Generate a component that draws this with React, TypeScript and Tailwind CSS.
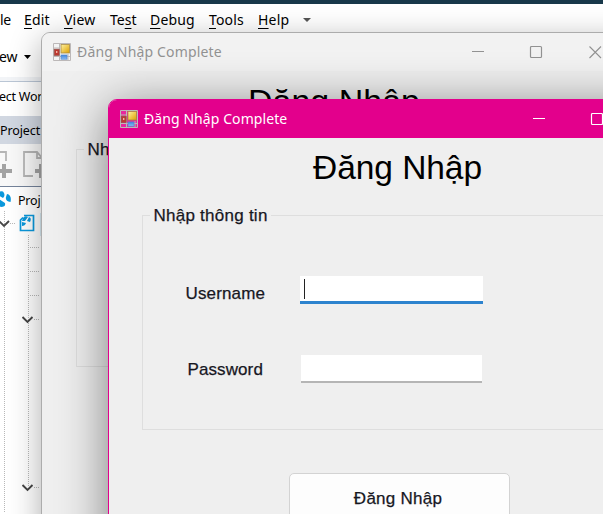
import type { ReactNode } from "react";

const ui = "font-['Noto_Sans','Open_Sans',sans-serif]";
const formFont = "font-['Liberation_Sans',Arial,sans-serif]";
const formText = "text-[17px] text-[#17171f] [-webkit-text-stroke:0.25px_#17171f]";

function FormIcon() {
  return (
    <svg className="block h-[18px] w-[18px] shrink-0" viewBox="0 0 18 18">
      <defs>
        <linearGradient id="gold" x1="0" y1="0" x2="1" y2="1">
          <stop offset="0" stopColor="#fff2a0" />
          <stop offset="1" stopColor="#dda000" />
        </linearGradient>
        <linearGradient id="azure" x1="0" y1="0" x2="0" y2="1">
          <stop offset="0" stopColor="#3f83dc" />
          <stop offset="1" stopColor="#8bbcf2" />
        </linearGradient>
      </defs>
      <path d="M.5 .5H17.5V17.5H.5ZM6.5 1V17M1 5H7M1 13.5H17M15 11V17" fill="#fff" fillOpacity="0.15" stroke="#bcb8b8" />
      <rect x="8" y="1.5" width="8.5" height="8.5" fill="url(#gold)" stroke="#a98b42" strokeWidth=".8" />
      <rect x="1.2" y="6.2" width="5" height="6.3" fill="#bd3830" stroke="#94544e" strokeWidth=".7" />
      <rect x="3" y="8" width="1.4" height="2" fill="#f1b3a4" />
      <rect x="8" y="12" width="6" height="4.2" fill="url(#azure)" stroke="#568bd0" strokeWidth=".7" />
    </svg>
  );
}

function CaptionButtons() {
  return (
    <svg className="block h-[14px] w-[130px] shrink-0" viewBox="0 0 130 14" fill="none" stroke="currentColor">
      <path d="M0 6.5H12" />
      <rect x="58.5" y="1.5" width="11" height="11" rx="1" strokeWidth="1.2" />
      <path d="M117.5 1.5L129 13M129 1.5L117.5 13" strokeWidth="1.1" />
    </svg>
  );
}

function FormWindow({ frame, bar, caption, gap, heading, group, children }: {
  frame: string; bar: string; caption: string; gap: string; heading: string; group: string; children?: ReactNode;
}) {
  return (
    <section className={"absolute flex h-[600px] flex-col overflow-hidden rounded-tl-[9px] border bg-[#efefef] " + frame}>
      <header className={"flex h-[38px] shrink-0 items-center pl-[11px] " + bar}>
        <FormIcon />
        <span className={"ml-[6px] w-[146px] shrink-0 whitespace-nowrap text-[14px] leading-5 " + ui}>{caption}</span>
        <div className={gap}><CaptionButtons /></div>
      </header>
      <h1 className={"shrink-0 whitespace-nowrap leading-[38px] text-black " + formFont + " " + heading}>Đăng Nhập</h1>
      <fieldset className={"shrink-0 border border-[#dedede] " + group}>
        <legend className={"ml-[7px] h-[22px] whitespace-nowrap pl-[3.5px] pr-[3px] leading-6 tracking-[0.25px] " + formText + " " + formFont}>Nhập thông tin</legend>
        {children && <div className="flex flex-col pl-[42px] pt-[50px]">{children}</div>}
      </fieldset>
      {children && (
        <button className={"ml-[180px] mt-[43px] flex h-[49px] w-[221px] shrink-0 items-center justify-center rounded-[5px] border border-[#d3d3d3] bg-[#fdfdfd] pr-[3px] pt-[2px] tracking-[0.25px] " + formText + " " + formFont}>Đăng Nhập</button>
      )}
    </section>
  );
}

function Menu({ text, hot, className }: { text: string; hot: number; className: string }) {
  return (
    <span className={"shrink-0 whitespace-nowrap " + className}>
      {text.slice(0, hot)}<u className="underline-offset-[3px]">{text[hot]}</u>{text.slice(hot + 1)}
    </span>
  );
}

function ProjectTree() {
  return (
    <svg className="block h-[326px] w-[42px]" viewBox="0 187 42 326" fill="none">
      <g stroke="#b8b8b8" strokeDasharray="1 1">
        <path d="M4.5 211V514M28.5 235V487M10 223.5H15M30 247.5H40M30 271.5H40M30 295.5H40M34 319.5H40M34 487.5H40" />
      </g>
      <g fill="#0b98dc">
        <path d="M3 191.5Q-1 190 -2 195L3 198Q6 195 3 191.5ZM7 194Q12 195 10.5 202Q5 201 6 197ZM-1 199L5 203Q6 207 1 207L-1 206Z" />
        <path d="M23 218Q25 215 28 217L25 221H22ZM29 217Q32 218 30 222L27 221ZM22 222L26 223Q25 226 22 226Z" />
      </g>
      <path d="M23 217.5L20.5 220V230.5H33.5V215.5H24" stroke="#0b98dc" strokeWidth="1.7" />
      <g stroke="#454545" strokeWidth="1.9">
        <path d="M-1 221L4 226L9 221M22.5 317L27.5 322L32.5 317M22.5 485L27.5 490L32.5 485" />
      </g>
      <rect x="40" y="213" width="2" height="23" fill="#d9edf5" />
    </svg>
  );
}

export default function App() {
  return (
    <main className={"relative h-[514px] w-[603px] overflow-hidden bg-white text-black " + ui}>
      <div className="h-1 bg-[#18384a]" />
      <nav className="flex h-8 items-center text-[14px] leading-5">
        <span className="w-6 shrink-0 tracking-[-0.4px]">le</span>
        <Menu text="Edit" hot={0} className="w-10 tracking-[0.2px]" />
        <Menu text="View" hot={0} className="w-[46px] tracking-[0.2px]" />
        <Menu text="Test" hot={2} className="w-10" />
        <Menu text="Debug" hot={0} className="w-[59px] tracking-[0.15px]" />
        <Menu text="Tools" hot={0} className="w-[49px] tracking-[0.15px]" />
        <Menu text="Help" hot={0} className="w-[45px] tracking-[0.2px]" />
        <svg className="h-1 w-2" viewBox="0 0 8 4"><path d="M0 0H8L4 4Z" fill="#555" /></svg>
      </nav>
      <aside className="flex h-[478px] w-[42px] flex-col overflow-hidden text-[14px]">
        <div className="flex h-[41px] shrink-0 items-center">
          <span className="-ml-[1px] w-[25px] shrink-0">ew</span>
          <svg className="h-1 w-[7px] shrink-0" viewBox="0 0 8 4" preserveAspectRatio="none"><path d="M0 0H8L4 4Z" fill="#000" /></svg>
        </div>
        <div className="h-1 shrink-0 bg-[#f2f4f7]" />
        <div className="flex h-[35px] shrink-0 items-center whitespace-nowrap border-t border-[#bac6d5] pb-[3px] text-[12.5px] tracking-[-0.25px]"><span className="-ml-[1px]">ect Wor</span></div>
        <div className="flex h-7 shrink-0 items-center whitespace-nowrap bg-[#d1d7e1] pt-[2px] text-[12.5px] tracking-[-0.1px]">Project</div>
        <div className="h-[43px] shrink-0 border-b border-[#74839a] bg-[#f8f8f8]">
          <svg className="block h-[42px] w-[42px]" viewBox="0 144 42 42" fill="none" stroke="#b5b5b5" strokeWidth="1.8">
            <path d="M0 152H6V161M33 176H24V152H37L42 158M37 152V158H42" />
            <path d="M4 164V178M-2 171H12M41 164V178M35 171H42" stroke="#a3a3a3" strokeWidth="4" />
          </svg>
        </div>
        <div className="grid">
          <div className="col-start-1 row-start-1"><ProjectTree /></div>
          <span className="col-start-1 row-start-1 pl-[18px] pt-[5px] text-[12.5px] leading-[18px] tracking-[-0.2px]">Proj</span>
        </div>
      </aside>

      <FormWindow
        frame="left-[41px] top-8 w-[700px] border-[#acacac] shadow-[0_8px_32px_rgba(0,0,0,0.32)]"
        bar="bg-[#f3f3f3]/70 text-[#929292] tracking-[0.17px]"
        caption="Đăng Nhập Complete"
        gap="ml-[249px]"
        heading="ml-[206px] mt-[11px] text-[34px]"
        group="ml-[34px] mt-[18px] h-[229px] w-[600px]"
      />
      <FormWindow
        frame="left-[108px] top-[99px] w-[700px] border-[#e3008c] shadow-[0_8px_50px_rgba(0,0,0,0.48)]"
        bar="bg-[#e3008c] text-white tracking-[0.08px]"
        caption="Đăng Nhập Complete"
        gap="ml-[243px]"
        heading="ml-[204px] mt-[11px] text-[33.5px] tracking-[-0.05px]"
        group="ml-[33px] mt-[17px] h-[226px] w-[600px]"
      >
        <label className="flex h-7 items-center">
          <span className={"w-[115px] pl-[0.5px] pt-[7px] leading-5 tracking-[0.15px] " + formText + " " + formFont}>Username</span>
          <span className="flex h-7 w-[183px] items-center border-b-[3px] border-[#2d83ce] bg-white pl-1">
            <i className="h-5 w-px bg-[#222]" />
          </span>
        </label>
        <label className="mt-[51px] flex h-7 items-center">
          <span className={"w-[116px] pl-[2.5px] pt-px leading-5 tracking-[0.1px] " + formText + " " + formFont}>Password</span>
          <span className="h-7 w-[181px] border-b-2 border-[#b5b5b5] bg-white" />
        </label>
      </FormWindow>
    </main>
  );
}
